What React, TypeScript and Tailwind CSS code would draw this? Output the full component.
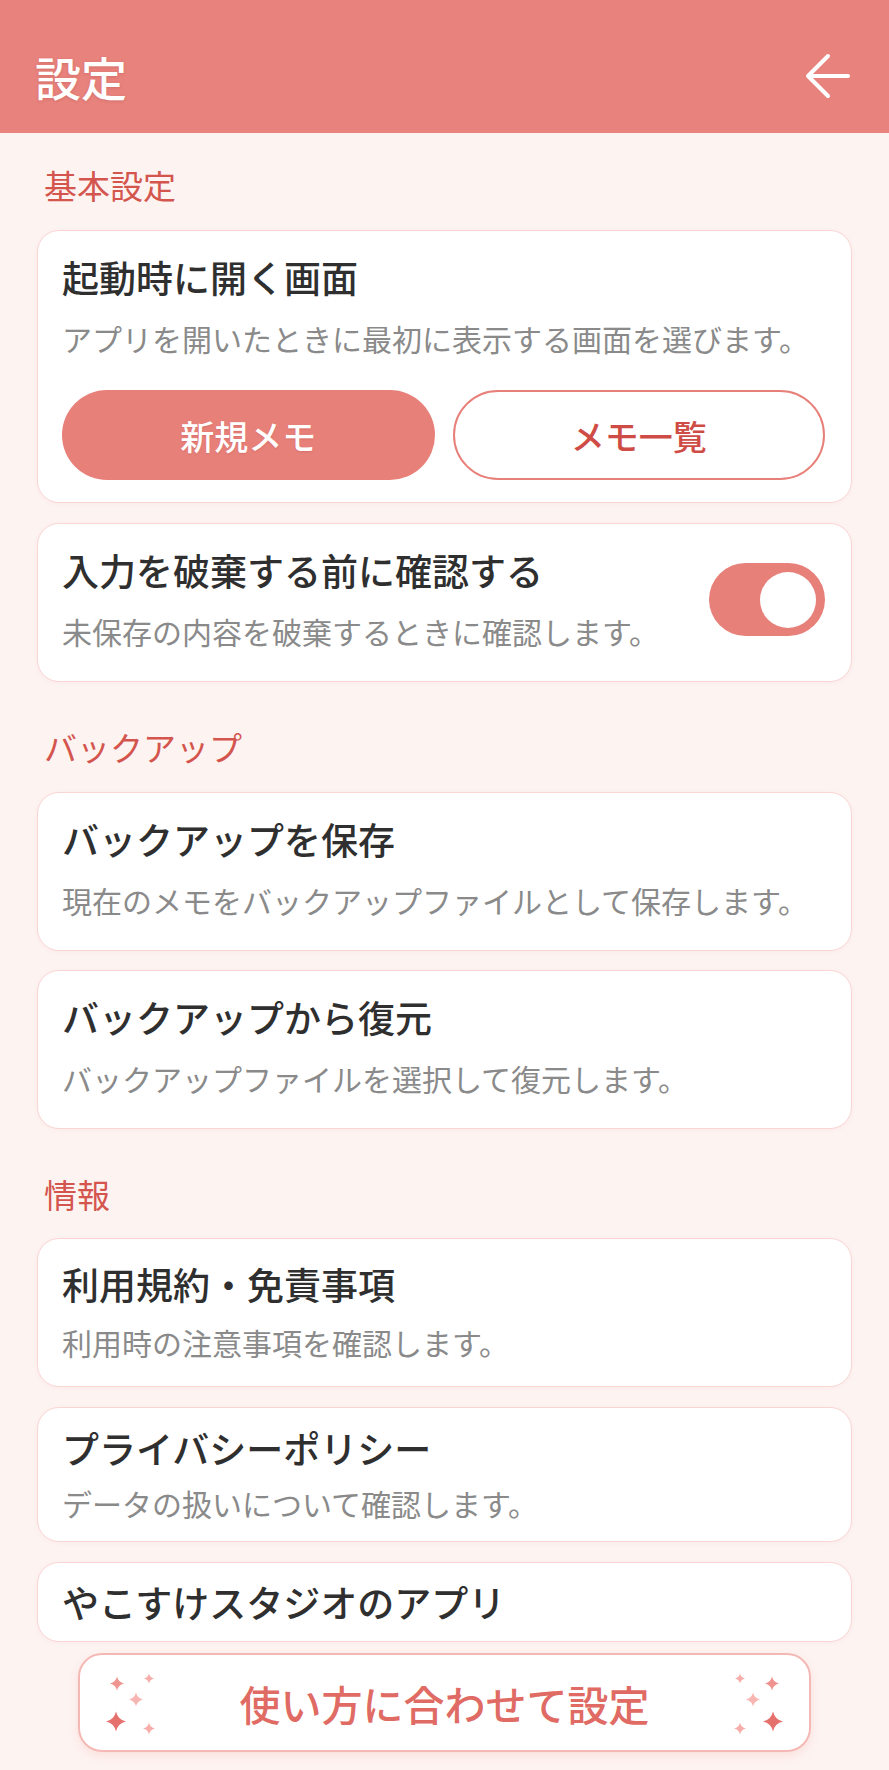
import React from "react";

const FONT = { fontFamily: '"Noto Sans CJK JP", "Noto Sans", sans-serif' };

function Sparkle({ cx, cy, r, color }: { cx: number; cy: number; r: number; color: string }) {
  const k = r * 0.18;
  const d = `M ${cx} ${cy - r} Q ${cx + k} ${cy - k} ${cx + r} ${cy} Q ${cx + k} ${cy + k} ${cx} ${cy + r} Q ${cx - k} ${cy + k} ${cx - r} ${cy} Q ${cx - k} ${cy - k} ${cx} ${cy - r} Z`;
  return <path d={d} fill={color} />;
}

function Sparkles({ mirror }: { mirror?: boolean }) {
  const pts = [
    { x: 15, y: 15.5, r: 7, c: "#f09490" },
    { x: 47, y: 10.5, r: 5, c: "#f7aeaa" },
    { x: 34, y: 31.5, r: 7, c: "#f8b6b2" },
    { x: 14, y: 53.5, r: 10, c: "#e5716c" },
    { x: 47, y: 60.5, r: 6, c: "#f7aeaa" },
  ];
  return (
    <svg width="60" height="70" viewBox="0 0 60 70" className="shrink-0">
      {pts.map((p, i) => (
        <Sparkle key={i} cx={mirror ? 60 - p.x : p.x} cy={p.y} r={p.r} color={p.c} />
      ))}
    </svg>
  );
}

function SectionLabel({ children, className }: { children: React.ReactNode; className: string }) {
  return (
    <div className={`text-[33px] leading-[40px] text-[#d4554e] pl-[7px] ${className}`}>{children}</div>
  );
}

function Title({ children }: { children: React.ReactNode }) {
  return <div className="text-[37px] leading-[44px] font-medium text-[#2f2f2f]">{children}</div>;
}

function Desc({ children, className }: { children: React.ReactNode; className: string }) {
  return <div className={`text-[30px] leading-[40px] text-[#8a8a8a] ${className}`}>{children}</div>;
}

const card =
  "bg-white border border-[#f9d6d4] rounded-[22px] px-[24px] shadow-[0_1px_4px_rgba(230,140,140,0.08)]";

export default function App() {
  return (
    <div className="w-[889px] h-[1770px] bg-[#fdf3f1] overflow-hidden flex flex-col" style={FONT}>
      <header className="h-[133px] shrink-0 bg-[#e8827c] flex items-center justify-between pl-[35px] pr-[38px] pt-[18px]">
        <div className="text-[46px] leading-[56px] font-medium text-white [text-shadow:0_1px_3px_rgba(150,50,50,0.25)]">
          設定
        </div>
        <svg width="48" height="48" viewBox="0 0 48 48" fill="none" stroke="white" strokeWidth="4" strokeLinecap="round" strokeLinejoin="round">
          <path d="M25 4 L5 24 L25 44" />
          <path d="M7 24 H45" />
        </svg>
      </header>

      <main className="flex-1 px-[37px] flex flex-col">
        <SectionLabel className="mt-[32px] mb-[25px]">基本設定</SectionLabel>

        <div className={`${card} pt-[24px] pb-[22px]`}>
          <Title>起動時に開く画面</Title>
          <Desc className="mt-[19px]">アプリを開いたときに最初に表示する画面を選びます。</Desc>
          <div className="mt-[32px] grid grid-cols-2 gap-[18px] pr-[2px]">
            <button className="h-[90px] rounded-full bg-[#e8807a] text-white text-[34px] font-medium [text-shadow:0_1px_2px_rgba(150,50,50,0.2)]">
              新規メモ
            </button>
            <button className="h-[90px] rounded-full bg-white border-2 border-[#e8807a] text-[#cf4c46] text-[34px] font-medium">
              メモ一覧
            </button>
          </div>
        </div>

        <div className={`${card} mt-[20px] pt-[24px] pb-[30px] flex items-center justify-between pr-[26px]`}>
          <div>
            <Title>入力を破棄する前に確認する</Title>
            <Desc className="mt-[19px]">未保存の内容を破棄するときに確認します。</Desc>
          </div>
          <div className="w-[116px] h-[73px] rounded-full bg-[#e8807a] flex items-center justify-end pr-[9px]">
            <div className="w-[56px] h-[56px] rounded-full bg-white" />
          </div>
        </div>

        <SectionLabel className="mt-[45px] mb-[25px]">バックアップ</SectionLabel>

        <div className={`${card} pt-[24px] pb-[30px]`}>
          <Title>バックアップを保存</Title>
          <Desc className="mt-[19px]">現在のメモをバックアップファイルとして保存します。</Desc>
        </div>

        <div className={`${card} mt-[19px] pt-[24px] pb-[30px]`}>
          <Title>バックアップから復元</Title>
          <Desc className="mt-[19px]">バックアップファイルを選択して復元します。</Desc>
        </div>

        <SectionLabel className="mt-[45px] mb-[24px]">情報</SectionLabel>

        <div className={`${card} pt-[23px] pb-[24px]`}>
          <Title>利用規約・免責事項</Title>
          <Desc className="mt-[16px]">利用時の注意事項を確認します。</Desc>
        </div>

        <div className={`${card} mt-[20px] pt-[18px] pb-[18px]`}>
          <Title>プライバシーポリシー</Title>
          <Desc className="mt-[13px]">データの扱いについて確認します。</Desc>
        </div>

        <div className={`${card} mt-[20px] pt-[17px] pb-[17px]`}>
          <Title>やこすけスタジオのアプリ</Title>
        </div>
      </main>

      <div className="shrink-0 px-[78px] pb-[18px]">
        <button className="w-full h-[99px] rounded-[24px] bg-white border-2 border-[#f5b9b5] shadow-[0_4px_10px_rgba(232,130,124,0.15)] flex items-center justify-between px-[22px]">
          <Sparkles />
          <span className="text-[41px] leading-[48px] font-medium text-[#e06b64]">使い方に合わせて設定</span>
          <Sparkles mirror />
        </button>
      </div>
    </div>
  );
}
